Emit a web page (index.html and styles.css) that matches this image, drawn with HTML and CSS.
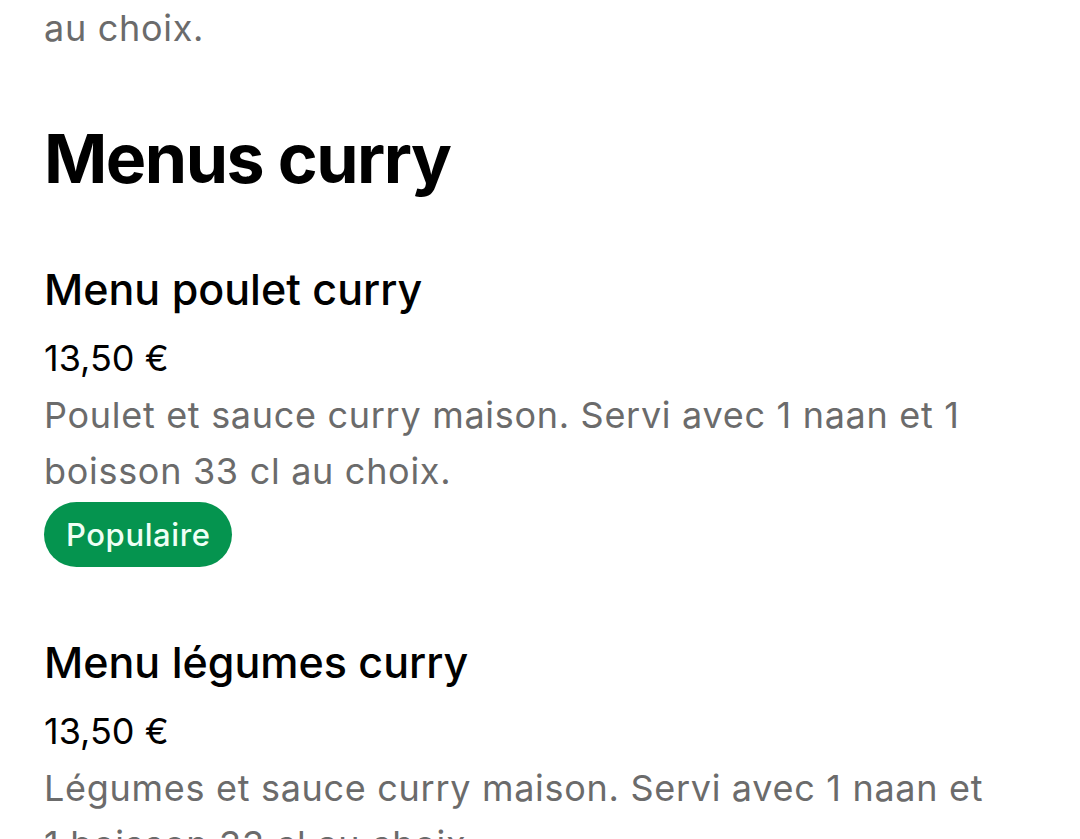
FILE: index.html
```html
<!DOCTYPE html>
<html lang="fr">
<head>
<meta charset="utf-8">
<title>Menus curry</title>
<link rel="stylesheet" href="styles.css">
</head>
<body>
<main class="menu">
  <p class="desc tail">au choix.</p>
  <section class="category">
    <h2 class="cat-title">Menus curry</h2>
    <ul class="items">
      <li class="item">
        <h3 class="item-name">Menu poulet curry</h3>
        <div class="price">13,50 €</div>
        <p class="desc">Poulet et sauce curry maison. Servi avec 1 naan et 1 boisson 33 cl au choix.</p>
        <span class="badge">Populaire</span>
      </li>
      <li class="item">
        <h3 class="item-name">Menu légumes curry</h3>
        <div class="price">13,50 €</div>
        <p class="desc">Légumes et sauce curry maison. Servi avec 1 naan et 1 boisson 33 cl au choix.</p>
      </li>
    </ul>
  </section>
</main>
</body>
</html>
```
FILE: styles.css
```css
html, body {
  margin: 0;
  padding: 0;
  background: #ffffff;
}
body {
  font-family: Inter, "Noto Sans", "Liberation Sans", sans-serif;
  color: #000000;
  overflow: hidden;
  height: 839px;
}
.menu {
  padding: 0 44px;
  max-width: 950px;
}
.desc {
  margin: 0;
  font-size: 36px;
  line-height: 56px;
  letter-spacing: 0.7px;
  color: #6b6b6b;
  font-weight: 400;
}
.item .desc {
  margin-top: 1px;
}
.category {
  margin-top: 62px;
}
.cat-title {
  margin: 0;
  font-size: 68px;
  line-height: 80px;
  font-weight: 700;
  letter-spacing: -1.5px;
}
.items {
  list-style: none;
  margin: 63px 0 0;
  padding: 0;
  display: flex;
  flex-direction: column;
  gap: 67px;
}
.item {
  display: flex;
  flex-direction: column;
  align-items: flex-start;
}
.item-name {
  margin: 0;
  font-size: 43px;
  line-height: 56px;
  font-weight: 500;
}
.price {
  margin-top: 13px;
  font-size: 36px;
  line-height: 56px;
}
.badge {
  margin-top: 3px;
  height: 65px;
  padding: 0 22px;
  border-radius: 33px;
  background: #05944f;
  color: #effff5;
  font-size: 31px;
  font-weight: 500;
  letter-spacing: 0.6px;
  display: inline-flex;
  align-items: center;
}
```
